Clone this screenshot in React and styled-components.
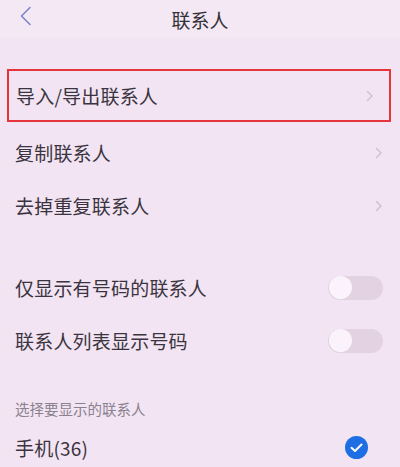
import React from 'react'
import styled, { createGlobalStyle } from 'styled-components'

const GlobalStyle = createGlobalStyle`
  html, body {
    margin: 0;
    padding: 0;
    background: #f2e4f2;
  }
  body {
    font-family: "Noto Sans CJK SC", "Noto Sans", sans-serif;
  }
`

function Chevron() {
  return (
    <Arrow width="8" height="12" viewBox="0 0 8 12">
      <path d="M1.5 1.5 L6 6 L1.5 10.5" fill="none" stroke="#cfc3d1" strokeWidth="1.5" strokeLinecap="round" strokeLinejoin="round" />
    </Arrow>
  )
}

function Toggle() {
  return (
    <Track>
      <Knob />
    </Track>
  )
}

function CheckMark() {
  return (
    <svg width="23" height="23" viewBox="0 0 23 23">
      <circle cx="11.5" cy="11.5" r="11.5" fill="#1e6fe3" />
      <path d="M6.5 11.8 L10 15 L16.5 8.5" fill="none" stroke="#ffffff" strokeWidth="2" strokeLinecap="round" strokeLinejoin="round" />
    </svg>
  )
}

export default function App() {
  return (
    <Page>
      <GlobalStyle />
      <Header>
        <Back width="14" height="20" viewBox="0 0 14 20">
          <path d="M11 1.5 L2.5 10 L11 18.5" fill="none" stroke="#7e86c9" strokeWidth="1.6" strokeLinecap="round" strokeLinejoin="round" />
        </Back>
        <Title>联系人</Title>
      </Header>

      <List>
        <Row highlighted>
          <Label>导入/导出联系人</Label>
          <Chevron />
        </Row>
        <Row>
          <Label>复制联系人</Label>
          <Chevron />
        </Row>
        <Row>
          <Label>去掉重复联系人</Label>
          <Chevron />
        </Row>
      </List>

      <List>
        <Row>
          <Label>仅显示有号码的联系人</Label>
          <Toggle />
        </Row>
        <Row>
          <Label>联系人列表显示号码</Label>
          <Toggle />
        </Row>
      </List>

      <SectionLabel>选择要显示的联系人</SectionLabel>
      <Row>
        <Label>手机(36)</Label>
        <CheckWrap>
          <CheckMark />
        </CheckWrap>
      </Row>
    </Page>
  )
}

const Page = styled.div`
  width: 400px;
  height: 467px;
  overflow: hidden;
  background: #f2e4f2;
  color: #3a3440;
`

const Header = styled.div`
  position: relative;
  height: 38px;
  display: flex;
  align-items: center;
  justify-content: center;
  background: #f3e8f4;
`

const Back = styled.svg`
  position: absolute;
  left: 19px;
  top: 6px;
`

const Title = styled.div`
  font-size: 19px;
  color: #333036;
`

const List = styled.div`
  display: flex;
  flex-direction: column;
  padding-top: 29px;
`

const Row = styled.div`
  height: ${p => (p.highlighted ? '49px' : '53px')};
  display: flex;
  align-items: center;
  justify-content: space-between;
  padding: ${p => (p.highlighted ? '0 15px 0 7px' : '0 17px 0 15px')};
  margin: ${p => (p.highlighted ? '2px 9px 4px 7px' : '0')};
  border: ${p => (p.highlighted ? '2px solid #e5343a' : 'none')};
  margin-top: ${p => (p.highlighted ? '2px' : '0')};
`

const Label = styled.span`
  font-size: 19px;
  color: #3a3440;
  letter-spacing: 0.2px;
`

const Arrow = styled.svg`
  display: block;
`

const Track = styled.div`
  width: 55px;
  height: 24px;
  border-radius: 12px;
  background: #e2d2e2;
  display: flex;
  align-items: center;
  padding-left: 1px;
  box-sizing: border-box;
`

const Knob = styled.div`
  width: 23px;
  height: 23px;
  border-radius: 50%;
  background: #fbf3fb;
`

const SectionLabel = styled.div`
  height: 54px;
  box-sizing: border-box;
  padding: 31px 15px 0;
  font-size: 14.5px;
  color: #8a8290;
`

const CheckWrap = styled.div`
  display: flex;
  margin-right: 15px;
`
